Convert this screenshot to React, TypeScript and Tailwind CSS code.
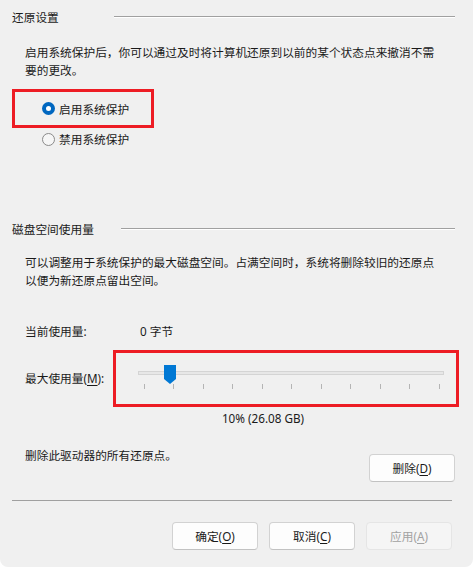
import { memo } from 'react';

const FONT = "font-['Segoe_UI','Noto_Sans','Noto_Sans_CJK_SC',sans-serif]";

const GroupHeader = ({ title, lineWidth }: { title: string; lineWidth: number }) => (
  <div className="flex h-[18px] items-center justify-between pl-[12px] pr-[18px]">
    <span>{title}</span>
    <div className="flex flex-col" style={{ width: lineWidth }}>
      <div className="h-px bg-[#a0a0a0]" />
      <div className="h-px bg-white" />
    </div>
  </div>
);

const Radio = ({ checked, label }: { checked?: boolean; label: string }) => (
  <div className="flex h-[18px] items-center gap-[4px]">
    {checked ? (
      <span className="flex h-[13px] w-[13px] items-center justify-center rounded-full bg-[#0067c0]">
        <span className="h-[5px] w-[5px] rounded-full bg-white" />
      </span>
    ) : (
      <span className="h-[13px] w-[13px] rounded-full border border-[#8a8a8a] bg-[#f6f6f6]" />
    )}
    <span>{label}</span>
  </div>
);

const DialogButton = ({
  label,
  accel,
  disabled,
}: {
  label: string;
  accel: string;
  disabled?: boolean;
}) => (
  <button
    type="button"
    className={
      disabled
        ? 'flex h-[28px] w-[86px] items-center justify-center rounded-[4px] border border-[#e5e5e5] bg-[#f5f5f5] text-[#a2a2a2]'
        : 'flex h-[28px] w-[86px] items-center justify-center rounded-[4px] border border-[#d2d2d2] border-b-[#c2c2c2] bg-[#fdfdfd] text-[#1a1a1a]'
    }
  >
    {label}(<span className="underline underline-offset-2">{accel}</span>)
  </button>
);

const UsageSlider = () => {
  const ticks = Array.from({ length: 11 }, (_, i) => 27.5 + i * 29.5);
  return (
    <svg width={340} height={51} viewBox="0 0 340 51">
      <rect x={22.5} y={18.5} width={305} height={3} fill="#e7e7e7" stroke="#d4d4d4" />
      {ticks.map((x) => (
        <line key={x} x1={Math.round(x) + 0.5} x2={Math.round(x) + 0.5} y1={31} y2={36} stroke="#b4b4b4" />
      ))}
      <path d="M48 12 H60 V26 L54 31 L48 26 Z" fill="#0078d4" />
    </svg>
  );
};

export const App = memo(() => {
  return (
    <div className={`h-[567px] w-[473px] overflow-hidden rounded-b-[8px] bg-[#f0f0f0] text-[11.7px] leading-[18px] text-[#1a1a1a] ${FONT}`}>
      <div className="pt-[8px]">
        <GroupHeader title="还原设置" lineWidth={341} />
      </div>

      <div className="mt-[17px] px-[25px]">
        <p className="whitespace-nowrap">启用系统保护后，你可以通过及时将计算机还原到以前的某个状态点来撤消不需</p>
        <p>要的更改。</p>
      </div>

      <div className="ml-[12px] mt-[10px] flex h-[39px] w-[142px] items-center border-[3px] border-[#ed1c24] pl-[27px]">
        <Radio checked label="启用系统保护" />
      </div>
      <div className="ml-[42px] mt-[2px]">
        <Radio label="禁用系统保护" />
      </div>

      <div className="mt-[72px]">
        <GroupHeader title="磁盘空间使用量" lineWidth={334} />
      </div>

      <div className="mt-[15px] px-[25px]">
        <p className="whitespace-nowrap">可以调整用于系统保护的最大磁盘空间。占满空间时，系统将删除较旧的还原点</p>
        <p>以便为新还原点留出空间。</p>
      </div>

      <div className="mt-[33px] flex h-[18px] px-[25px]">
        <span className="w-[115px]">当前使用量:</span>
        <span>0 字节</span>
      </div>

      <div className="mt-[10px] flex items-center pl-[25px]">
        <span className="w-[88px] pb-[2px]">
          最大使用量(<span className="underline underline-offset-2">M</span>):
        </span>
        <div className="h-[57px] w-[346px] border-[3px] border-[#ed1c24]">
          <UsageSlider />
        </div>
      </div>

      <div className="mt-[2px] flex w-[526px] justify-center">
        <span>10% (26.08 GB)</span>
      </div>

      <div className="mt-[19px] flex items-start justify-between pl-[25px] pr-[18px]">
        <span>删除此驱动器的所有还原点。</span>
        <div className="mt-[8px]">
          <DialogButton label="删除" accel="D" />
        </div>
      </div>

      <div className="mx-[12px] mt-[18px] w-[440px] border-t border-[#a0a0a0]" />

      <div className="mt-[21px] flex justify-end gap-[11px] pr-[21px]">
        <DialogButton label="确定" accel="O" />
        <DialogButton label="取消" accel="C" />
        <DialogButton label="应用" accel="A" disabled />
      </div>
    </div>
  );
});

App.displayName = 'App';

export default App;
